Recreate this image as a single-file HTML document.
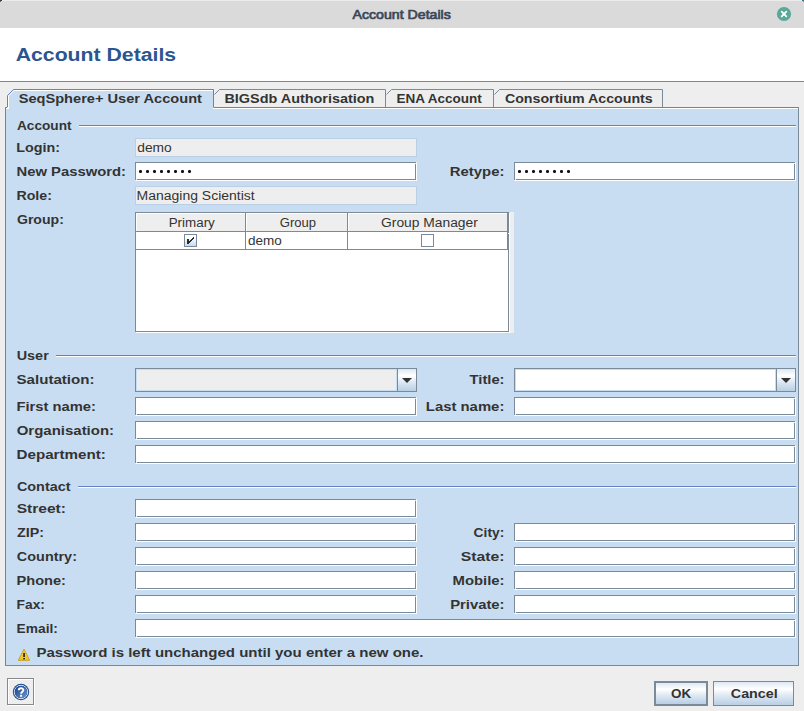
<!DOCTYPE html>
<html><head><meta charset="utf-8"><title>Account Details</title>
<style>
html,body{margin:0;padding:0}
body{width:804px;height:711px;overflow:hidden;background:#eeeeee;position:relative;font-family:"Liberation Sans",sans-serif}
body>div,body>span{position:absolute;display:block}
span{white-space:pre;transform-origin:0 0;font-family:"Liberation Sans",sans-serif}
</style></head><body>
<div style="left:0px;top:0px;width:804px;height:28px;background:#dadada;"></div>
<div style="left:0px;top:0px;width:804px;height:1px;background:#ececec;"></div>
<div style="left:0px;top:0px;width:2px;height:1px;background:#3a3a48;"></div>
<div style="left:0px;top:1px;width:1px;height:1px;background:#6b6b75;"></div>
<div style="left:802px;top:0px;width:2px;height:1px;background:#3f6f73;"></div>
<div style="left:803px;top:1px;width:1px;height:1px;background:#7da0a2;"></div>
<div style="left:0px;top:28px;width:804px;height:53px;background:#ffffff;"></div>
<div style="left:0px;top:81px;width:804px;height:1px;background:#868686;"></div>
<div style="left:5px;top:107px;width:794px;height:559px;background:#c8ddf2;"></div>
<div style="left:5px;top:107px;width:1px;height:559px;background:#6382bf;"></div>
<div style="left:5px;top:107px;width:794px;height:1px;background:#6382bf;"></div>
<div style="left:6px;top:108px;width:792px;height:1px;background:#ffffff;"></div>
<div style="left:798px;top:107px;width:1px;height:559px;background:#7a8a99;"></div>
<div style="left:5px;top:665px;width:794px;height:1px;background:#7a8a99;"></div>
<svg style="position:absolute;left:0;top:0" width="804" height="711" viewBox="0 0 804 711" shape-rendering="crispEdges"><path d="M214.5 94.5 L219.5 89.5 L385.5 89.5 L385.5 107" fill="none" stroke="#7a8a99" stroke-width="1" shape-rendering="auto"/><path d="M386.5 94.5 L391.5 89.5 L493.5 89.5 L493.5 107" fill="none" stroke="#7a8a99" stroke-width="1" shape-rendering="auto"/><path d="M494.5 94.5 L499.5 89.5 L662.5 89.5 L662.5 107" fill="none" stroke="#7a8a99" stroke-width="1" shape-rendering="auto"/><path d="M7 109 L7 96 L13.5 89.5 L214 89.5 L214 108 L7 108 Z" fill="#c8ddf2" shape-rendering="auto"/><path d="M8.5 108 L8.5 96 L14 90.5 L213 90.5" fill="none" stroke="#ffffff" stroke-width="1" shape-rendering="auto"/><path d="M7.5 107 L7.5 95.5 L13.5 89.5 L213.5 89.5 L213.5 107.5" fill="none" stroke="#6382bf" stroke-width="1" shape-rendering="auto"/></svg>
<div style="left:8px;top:107px;width:205px;height:2px;background:#c8ddf2;"></div>
<div style="left:8px;top:107px;width:1px;height:2px;background:#ffffff;"></div>
<div style="left:79px;top:125px;width:717px;height:1px;background:#6382bf;"></div>
<div style="left:79px;top:126px;width:717px;height:1px;background:#ffffff;"></div>
<div style="left:56px;top:355px;width:740px;height:1px;background:#6382bf;"></div>
<div style="left:56px;top:356px;width:740px;height:1px;background:#ffffff;"></div>
<div style="left:78px;top:486px;width:718px;height:1px;background:#6382bf;"></div>
<div style="left:78px;top:487px;width:718px;height:1px;background:#ffffff;"></div>
<div style="left:135px;top:138px;width:282px;height:19px;background:#eeeeee;border:1px solid #b8cfe5;box-sizing:border-box"></div>
<div style="left:136px;top:163px;width:281px;height:18px;background:#ffffff;"></div>
<div style="left:135px;top:162px;width:281px;height:18px;background:transparent;border:1px solid #7a8a99;box-sizing:border-box"></div>
<div style="left:135px;top:180px;width:1px;height:1px;background:#eeeeee;"></div>
<div style="left:136px;top:179px;width:1px;height:1px;background:#eeeeee;"></div>
<div style="left:416px;top:162px;width:1px;height:1px;background:#eeeeee;"></div>
<div style="left:415px;top:163px;width:1px;height:1px;background:#eeeeee;"></div>
<div style="left:515px;top:163px;width:281px;height:18px;background:#ffffff;"></div>
<div style="left:514px;top:162px;width:281px;height:18px;background:transparent;border:1px solid #7a8a99;box-sizing:border-box"></div>
<div style="left:514px;top:180px;width:1px;height:1px;background:#eeeeee;"></div>
<div style="left:515px;top:179px;width:1px;height:1px;background:#eeeeee;"></div>
<div style="left:795px;top:162px;width:1px;height:1px;background:#eeeeee;"></div>
<div style="left:794px;top:163px;width:1px;height:1px;background:#eeeeee;"></div>
<div style="left:135px;top:186px;width:282px;height:19px;background:#eeeeee;border:1px solid #b8cfe5;box-sizing:border-box"></div>
<div style="left:136px;top:398px;width:281px;height:18px;background:#ffffff;"></div>
<div style="left:135px;top:397px;width:281px;height:18px;background:transparent;border:1px solid #7a8a99;box-sizing:border-box"></div>
<div style="left:135px;top:415px;width:1px;height:1px;background:#eeeeee;"></div>
<div style="left:136px;top:414px;width:1px;height:1px;background:#eeeeee;"></div>
<div style="left:416px;top:397px;width:1px;height:1px;background:#eeeeee;"></div>
<div style="left:415px;top:398px;width:1px;height:1px;background:#eeeeee;"></div>
<div style="left:515px;top:398px;width:281px;height:18px;background:#ffffff;"></div>
<div style="left:514px;top:397px;width:281px;height:18px;background:transparent;border:1px solid #7a8a99;box-sizing:border-box"></div>
<div style="left:514px;top:415px;width:1px;height:1px;background:#eeeeee;"></div>
<div style="left:515px;top:414px;width:1px;height:1px;background:#eeeeee;"></div>
<div style="left:795px;top:397px;width:1px;height:1px;background:#eeeeee;"></div>
<div style="left:794px;top:398px;width:1px;height:1px;background:#eeeeee;"></div>
<div style="left:136px;top:422px;width:660px;height:18px;background:#ffffff;"></div>
<div style="left:135px;top:421px;width:660px;height:18px;background:transparent;border:1px solid #7a8a99;box-sizing:border-box"></div>
<div style="left:135px;top:439px;width:1px;height:1px;background:#eeeeee;"></div>
<div style="left:136px;top:438px;width:1px;height:1px;background:#eeeeee;"></div>
<div style="left:795px;top:421px;width:1px;height:1px;background:#eeeeee;"></div>
<div style="left:794px;top:422px;width:1px;height:1px;background:#eeeeee;"></div>
<div style="left:136px;top:446px;width:660px;height:18px;background:#ffffff;"></div>
<div style="left:135px;top:445px;width:660px;height:18px;background:transparent;border:1px solid #7a8a99;box-sizing:border-box"></div>
<div style="left:135px;top:463px;width:1px;height:1px;background:#eeeeee;"></div>
<div style="left:136px;top:462px;width:1px;height:1px;background:#eeeeee;"></div>
<div style="left:795px;top:445px;width:1px;height:1px;background:#eeeeee;"></div>
<div style="left:794px;top:446px;width:1px;height:1px;background:#eeeeee;"></div>
<div style="left:136px;top:500px;width:281px;height:18px;background:#ffffff;"></div>
<div style="left:135px;top:499px;width:281px;height:18px;background:transparent;border:1px solid #7a8a99;box-sizing:border-box"></div>
<div style="left:135px;top:517px;width:1px;height:1px;background:#eeeeee;"></div>
<div style="left:136px;top:516px;width:1px;height:1px;background:#eeeeee;"></div>
<div style="left:416px;top:499px;width:1px;height:1px;background:#eeeeee;"></div>
<div style="left:415px;top:500px;width:1px;height:1px;background:#eeeeee;"></div>
<div style="left:136px;top:524px;width:281px;height:18px;background:#ffffff;"></div>
<div style="left:135px;top:523px;width:281px;height:18px;background:transparent;border:1px solid #7a8a99;box-sizing:border-box"></div>
<div style="left:135px;top:541px;width:1px;height:1px;background:#eeeeee;"></div>
<div style="left:136px;top:540px;width:1px;height:1px;background:#eeeeee;"></div>
<div style="left:416px;top:523px;width:1px;height:1px;background:#eeeeee;"></div>
<div style="left:415px;top:524px;width:1px;height:1px;background:#eeeeee;"></div>
<div style="left:515px;top:524px;width:281px;height:18px;background:#ffffff;"></div>
<div style="left:514px;top:523px;width:281px;height:18px;background:transparent;border:1px solid #7a8a99;box-sizing:border-box"></div>
<div style="left:514px;top:541px;width:1px;height:1px;background:#eeeeee;"></div>
<div style="left:515px;top:540px;width:1px;height:1px;background:#eeeeee;"></div>
<div style="left:795px;top:523px;width:1px;height:1px;background:#eeeeee;"></div>
<div style="left:794px;top:524px;width:1px;height:1px;background:#eeeeee;"></div>
<div style="left:136px;top:548px;width:281px;height:18px;background:#ffffff;"></div>
<div style="left:135px;top:547px;width:281px;height:18px;background:transparent;border:1px solid #7a8a99;box-sizing:border-box"></div>
<div style="left:135px;top:565px;width:1px;height:1px;background:#eeeeee;"></div>
<div style="left:136px;top:564px;width:1px;height:1px;background:#eeeeee;"></div>
<div style="left:416px;top:547px;width:1px;height:1px;background:#eeeeee;"></div>
<div style="left:415px;top:548px;width:1px;height:1px;background:#eeeeee;"></div>
<div style="left:515px;top:548px;width:281px;height:18px;background:#ffffff;"></div>
<div style="left:514px;top:547px;width:281px;height:18px;background:transparent;border:1px solid #7a8a99;box-sizing:border-box"></div>
<div style="left:514px;top:565px;width:1px;height:1px;background:#eeeeee;"></div>
<div style="left:515px;top:564px;width:1px;height:1px;background:#eeeeee;"></div>
<div style="left:795px;top:547px;width:1px;height:1px;background:#eeeeee;"></div>
<div style="left:794px;top:548px;width:1px;height:1px;background:#eeeeee;"></div>
<div style="left:136px;top:572px;width:281px;height:18px;background:#ffffff;"></div>
<div style="left:135px;top:571px;width:281px;height:18px;background:transparent;border:1px solid #7a8a99;box-sizing:border-box"></div>
<div style="left:135px;top:589px;width:1px;height:1px;background:#eeeeee;"></div>
<div style="left:136px;top:588px;width:1px;height:1px;background:#eeeeee;"></div>
<div style="left:416px;top:571px;width:1px;height:1px;background:#eeeeee;"></div>
<div style="left:415px;top:572px;width:1px;height:1px;background:#eeeeee;"></div>
<div style="left:515px;top:572px;width:281px;height:18px;background:#ffffff;"></div>
<div style="left:514px;top:571px;width:281px;height:18px;background:transparent;border:1px solid #7a8a99;box-sizing:border-box"></div>
<div style="left:514px;top:589px;width:1px;height:1px;background:#eeeeee;"></div>
<div style="left:515px;top:588px;width:1px;height:1px;background:#eeeeee;"></div>
<div style="left:795px;top:571px;width:1px;height:1px;background:#eeeeee;"></div>
<div style="left:794px;top:572px;width:1px;height:1px;background:#eeeeee;"></div>
<div style="left:136px;top:596px;width:281px;height:18px;background:#ffffff;"></div>
<div style="left:135px;top:595px;width:281px;height:18px;background:transparent;border:1px solid #7a8a99;box-sizing:border-box"></div>
<div style="left:135px;top:613px;width:1px;height:1px;background:#eeeeee;"></div>
<div style="left:136px;top:612px;width:1px;height:1px;background:#eeeeee;"></div>
<div style="left:416px;top:595px;width:1px;height:1px;background:#eeeeee;"></div>
<div style="left:415px;top:596px;width:1px;height:1px;background:#eeeeee;"></div>
<div style="left:515px;top:596px;width:281px;height:18px;background:#ffffff;"></div>
<div style="left:514px;top:595px;width:281px;height:18px;background:transparent;border:1px solid #7a8a99;box-sizing:border-box"></div>
<div style="left:514px;top:613px;width:1px;height:1px;background:#eeeeee;"></div>
<div style="left:515px;top:612px;width:1px;height:1px;background:#eeeeee;"></div>
<div style="left:795px;top:595px;width:1px;height:1px;background:#eeeeee;"></div>
<div style="left:794px;top:596px;width:1px;height:1px;background:#eeeeee;"></div>
<div style="left:136px;top:620px;width:660px;height:18px;background:#ffffff;"></div>
<div style="left:135px;top:619px;width:660px;height:18px;background:transparent;border:1px solid #7a8a99;box-sizing:border-box"></div>
<div style="left:135px;top:637px;width:1px;height:1px;background:#eeeeee;"></div>
<div style="left:136px;top:636px;width:1px;height:1px;background:#eeeeee;"></div>
<div style="left:795px;top:619px;width:1px;height:1px;background:#eeeeee;"></div>
<div style="left:794px;top:620px;width:1px;height:1px;background:#eeeeee;"></div>
<div style="left:139px;top:170px;width:3px;height:3px;background:#111;border-radius:1.2px"></div>
<div style="left:146px;top:170px;width:3px;height:3px;background:#111;border-radius:1.2px"></div>
<div style="left:153px;top:170px;width:3px;height:3px;background:#111;border-radius:1.2px"></div>
<div style="left:160px;top:170px;width:3px;height:3px;background:#111;border-radius:1.2px"></div>
<div style="left:167px;top:170px;width:3px;height:3px;background:#111;border-radius:1.2px"></div>
<div style="left:174px;top:170px;width:3px;height:3px;background:#111;border-radius:1.2px"></div>
<div style="left:181px;top:170px;width:3px;height:3px;background:#111;border-radius:1.2px"></div>
<div style="left:188px;top:170px;width:3px;height:3px;background:#111;border-radius:1.2px"></div>
<div style="left:518px;top:170px;width:3px;height:3px;background:#111;border-radius:1.2px"></div>
<div style="left:525px;top:170px;width:3px;height:3px;background:#111;border-radius:1.2px"></div>
<div style="left:532px;top:170px;width:3px;height:3px;background:#111;border-radius:1.2px"></div>
<div style="left:539px;top:170px;width:3px;height:3px;background:#111;border-radius:1.2px"></div>
<div style="left:546px;top:170px;width:3px;height:3px;background:#111;border-radius:1.2px"></div>
<div style="left:553px;top:170px;width:3px;height:3px;background:#111;border-radius:1.2px"></div>
<div style="left:560px;top:170px;width:3px;height:3px;background:#111;border-radius:1.2px"></div>
<div style="left:567px;top:170px;width:3px;height:3px;background:#111;border-radius:1.2px"></div>
<div style="left:135px;top:368px;width:282px;height:24px;background:#c8ddf2;border:1px solid #7a8a99;box-sizing:border-box"></div>
<div style="left:137px;top:370px;width:259px;height:20px;background:#eeeeee;"></div>
<div style="left:397px;top:368px;width:20px;height:24px;background:linear-gradient(to bottom,#dde8f3 0%,#ffffff 30%,#dde8f3 60%,#b8cfe5 100%);border:1px solid #7a8a99;box-sizing:border-box"></div>
<svg style="position:absolute;left:402px;top:378px" width="10" height="5" viewBox="0 0 10 5"><path d="M0 0 L10 0 L5 5 Z" fill="#333"/></svg>
<div style="left:514px;top:368px;width:282px;height:24px;background:#c8ddf2;border:1px solid #7a8a99;box-sizing:border-box"></div>
<div style="left:516px;top:370px;width:259px;height:20px;background:#ffffff;"></div>
<div style="left:776px;top:368px;width:20px;height:24px;background:linear-gradient(to bottom,#dde8f3 0%,#ffffff 30%,#dde8f3 60%,#b8cfe5 100%);border:1px solid #7a8a99;box-sizing:border-box"></div>
<svg style="position:absolute;left:781px;top:378px" width="10" height="5" viewBox="0 0 10 5"><path d="M0 0 L10 0 L5 5 Z" fill="#333"/></svg>
<div style="left:510px;top:212px;width:4px;height:121px;background:#eeeeee;"></div>
<div style="left:136px;top:213px;width:374px;height:120px;background:#ffffff;"></div>
<div style="left:135px;top:212px;width:374px;height:120px;background:transparent;border:1px solid #7a8a99;box-sizing:border-box"></div>
<div style="left:136px;top:213px;width:371px;height:18px;background:#eeeeee;"></div>
<div style="left:136px;top:213px;width:371px;height:1px;background:#ffffff;"></div>
<div style="left:136px;top:213px;width:1px;height:18px;background:#ffffff;"></div>
<div style="left:246px;top:213px;width:1px;height:18px;background:#ffffff;"></div>
<div style="left:348px;top:213px;width:1px;height:18px;background:#ffffff;"></div>
<div style="left:136px;top:231px;width:372px;height:1px;background:#7a8a99;"></div>
<div style="left:136px;top:249px;width:372px;height:1px;background:#7a8a99;"></div>
<div style="left:245px;top:213px;width:1px;height:37px;background:#7a8a99;"></div>
<div style="left:347px;top:213px;width:1px;height:37px;background:#7a8a99;"></div>
<div style="left:507px;top:213px;width:1px;height:37px;background:#7a8a99;"></div>
<div style="left:508px;top:233px;width:1px;height:1px;background:#ffffff;"></div>
<div style="left:184px;top:234px;width:13px;height:13px;background:linear-gradient(to bottom,#ffffff 0%,#ffffff 25%,#c5daf0 100%);border:1px solid #7a8a99;box-sizing:border-box"></div>
<div style="left:187px;top:239px;width:2px;height:5px;background:#2b2b2b;"></div>
<div style="left:189px;top:241px;width:1px;height:2px;background:#2b2b2b;"></div>
<div style="left:190px;top:240px;width:1px;height:2px;background:#2b2b2b;"></div>
<div style="left:191px;top:239px;width:1px;height:2px;background:#2b2b2b;"></div>
<div style="left:192px;top:238px;width:1px;height:2px;background:#2b2b2b;"></div>
<div style="left:193px;top:237px;width:1px;height:2px;background:#2b2b2b;"></div>
<div style="left:421px;top:234px;width:13px;height:13px;background:#ffffff;border:1px solid #7a8a99;box-sizing:border-box"></div>
<svg style="position:absolute;left:17px;top:648px" width="14" height="14" viewBox="0 0 14 14"><defs><linearGradient id="wg" x1="0" y1="0" x2="0" y2="1"><stop offset="0" stop-color="#f3d34a"/><stop offset="1" stop-color="#f7c21d"/></linearGradient></defs><path d="M7 1.2 L12.7 12.3 L1.3 12.3 Z" fill="url(#wg)" stroke="#c99a16" stroke-width="0.9" stroke-linejoin="round"/><rect x="6.3" y="5" width="1.5" height="4" fill="#111"/><rect x="6.3" y="10" width="1.5" height="1.4" fill="#111"/></svg>
<div style="left:654px;top:681px;width:54px;height:25px;background:linear-gradient(to bottom,#dde8f3 0%,#ffffff 30%,#dde8f3 60%,#b8cfe5 100%);border:2px solid #7a8a99;box-sizing:border-box"></div>
<div style="left:713px;top:681px;width:81px;height:25px;background:linear-gradient(to bottom,#dde8f3 0%,#ffffff 30%,#dde8f3 60%,#b8cfe5 100%);border:1px solid #7a8a99;box-sizing:border-box"></div>
<div style="left:8px;top:679px;width:27px;height:27px;background:#ffffff;"></div>
<div style="left:9px;top:680px;width:25px;height:25px;background:#eeeeee;"></div>
<div style="left:7px;top:678px;width:27px;height:27px;background:transparent;border:1px solid #8a8a8a;box-sizing:border-box"></div>
<div style="left:9px;top:680px;width:24px;height:24px;background:#eeeeee;"></div>
<svg style="position:absolute;left:12px;top:683px" width="18" height="18" viewBox="0 0 18 18"><defs><linearGradient id="hg" x1="0" y1="0" x2="1" y2="1"><stop offset="0" stop-color="#123f86"/><stop offset="1" stop-color="#6f97c8"/></linearGradient></defs><circle cx="9" cy="9" r="8.2" fill="#1c4a93"/><circle cx="9" cy="9" r="6.7" fill="none" stroke="#fff" stroke-width="0.9"/><circle cx="9" cy="9" r="6.25" fill="url(#hg)"/><path d="M6.7 7.2 C6.7 4.6 11.4 4.6 11.4 7.1 C11.4 8.8 9.1 8.9 9.1 10.8" fill="none" stroke="#fff" stroke-width="1.9"/><rect x="8.1" y="11.8" width="2" height="2" fill="#fff"/></svg>
<svg style="position:absolute;left:776px;top:6px" width="16" height="16" viewBox="0 0 16 16"><circle cx="8" cy="8" r="7.1" fill="#58a99a"/><path d="M5.7 5.7 L10.3 10.3 M10.3 5.7 L5.7 10.3" stroke="#fff" stroke-width="1.8" stroke-linecap="round"/></svg>
<span style="left:0;top:7px;font-weight:normal;font-size:13px;line-height:15px;color:#3b4757;transform:translateX(352.49px) scaleX(1.0889);-webkit-text-stroke:0.7px #3b4757">Account Details</span>
<span style="left:0;top:45px;font-weight:bold;font-size:18px;line-height:20px;color:#2b5590;transform:translateX(15.68px) scaleX(1.1798)">Account Details</span>
<span style="left:0;top:92px;font-weight:bold;font-size:12.5px;line-height:14px;color:#333333;transform:translateX(18.64px) scaleX(1.1684)">SeqSphere+ User Account</span>
<span style="left:0;top:92px;font-weight:bold;font-size:12.5px;line-height:14px;color:#333333;transform:translateX(224.45px) scaleX(1.1525)">BIGSdb Authorisation</span>
<span style="left:0;top:92px;font-weight:bold;font-size:12.5px;line-height:14px;color:#333333;transform:translateX(396.57px) scaleX(1.0798)">ENA Account</span>
<span style="left:0;top:92px;font-weight:bold;font-size:12.5px;line-height:14px;color:#333333;transform:translateX(504.94px) scaleX(1.1359)">Consortium Accounts</span>
<span style="left:0;top:119px;font-weight:bold;font-size:12.5px;line-height:14px;color:#333333;transform:translateX(16.97px) scaleX(1.0910)">Account</span>
<span style="left:0;top:141px;font-weight:bold;font-size:12.5px;line-height:14px;color:#333333;transform:translateX(16.34px) scaleX(1.1453)">Login:</span>
<span style="left:0;top:165px;font-weight:bold;font-size:12.5px;line-height:14px;color:#333333;transform:translateX(16.44px) scaleX(1.1865)">New Password:</span>
<span style="left:0;top:189px;font-weight:bold;font-size:12.5px;line-height:14px;color:#333333;transform:translateX(16.38px) scaleX(1.1356)">Role:</span>
<span style="left:0;top:213px;font-weight:bold;font-size:12.5px;line-height:14px;color:#333333;transform:translateX(16.93px) scaleX(1.1262)">Group:</span>
<span style="left:0;top:165px;font-weight:bold;font-size:12.5px;line-height:14px;color:#333333;transform:translateX(449.81px) scaleX(1.1906)">Retype:</span>
<span style="left:0;top:349px;font-weight:bold;font-size:12.5px;line-height:14px;color:#333333;transform:translateX(16.68px) scaleX(1.1533)">User</span>
<span style="left:0;top:373px;font-weight:bold;font-size:12.5px;line-height:14px;color:#333333;transform:translateX(16.49px) scaleX(1.2080)">Salutation:</span>
<span style="left:0;top:400px;font-weight:bold;font-size:12.5px;line-height:14px;color:#333333;transform:translateX(16.43px) scaleX(1.1796)">First name:</span>
<span style="left:0;top:424px;font-weight:bold;font-size:12.5px;line-height:14px;color:#333333;transform:translateX(16.70px) scaleX(1.1983)">Organisation:</span>
<span style="left:0;top:448px;font-weight:bold;font-size:12.5px;line-height:14px;color:#333333;transform:translateX(16.49px) scaleX(1.2138)">Department:</span>
<span style="left:0;top:373px;font-weight:bold;font-size:12.5px;line-height:14px;color:#333333;transform:translateX(469.60px) scaleX(1.1787)">Title:</span>
<span style="left:0;top:400px;font-weight:bold;font-size:12.5px;line-height:14px;color:#333333;transform:translateX(425.79px) scaleX(1.1905)">Last name:</span>
<span style="left:0;top:480px;font-weight:bold;font-size:12.5px;line-height:14px;color:#333333;transform:translateX(16.88px) scaleX(1.1530)">Contact</span>
<span style="left:0;top:502px;font-weight:bold;font-size:12.5px;line-height:14px;color:#333333;transform:translateX(16.67px) scaleX(1.2455)">Street:</span>
<span style="left:0;top:526px;font-weight:bold;font-size:12.5px;line-height:14px;color:#333333;transform:translateX(16.98px) scaleX(1.1454)">ZIP:</span>
<span style="left:0;top:550px;font-weight:bold;font-size:12.5px;line-height:14px;color:#333333;transform:translateX(16.87px) scaleX(1.1535)">Country:</span>
<span style="left:0;top:574px;font-weight:bold;font-size:12.5px;line-height:14px;color:#333333;transform:translateX(16.51px) scaleX(1.1678)">Phone:</span>
<span style="left:0;top:598px;font-weight:bold;font-size:12.5px;line-height:14px;color:#333333;transform:translateX(16.59px) scaleX(1.1027)">Fax:</span>
<span style="left:0;top:622px;font-weight:bold;font-size:12.5px;line-height:14px;color:#333333;transform:translateX(16.58px) scaleX(1.1006)">Email:</span>
<span style="left:0;top:526px;font-weight:bold;font-size:12.5px;line-height:14px;color:#333333;transform:translateX(473.59px) scaleX(1.1038)">City:</span>
<span style="left:0;top:550px;font-weight:bold;font-size:12.5px;line-height:14px;color:#333333;transform:translateX(460.81px) scaleX(1.2615)">State:</span>
<span style="left:0;top:574px;font-weight:bold;font-size:12.5px;line-height:14px;color:#333333;transform:translateX(452.50px) scaleX(1.1892)">Mobile:</span>
<span style="left:0;top:598px;font-weight:bold;font-size:12.5px;line-height:14px;color:#333333;transform:translateX(450.14px) scaleX(1.1854)">Private:</span>
<span style="left:0;top:646px;font-weight:bold;font-size:12.5px;line-height:14px;color:#333333;transform:translateX(36.39px) scaleX(1.2013)">Password is left unchanged until you enter a new one.</span>
<span style="left:0;top:687px;font-weight:bold;font-size:12.5px;line-height:14px;color:#333333;transform:translateX(670.96px) scaleX(1.0757)">OK</span>
<span style="left:0;top:687px;font-weight:bold;font-size:12.5px;line-height:14px;color:#333333;transform:translateX(730.86px) scaleX(1.1416)">Cancel</span>
<span style="left:0;top:141px;font-weight:normal;font-size:12.5px;line-height:14px;color:#333333;transform:translateX(137.24px) scaleX(1.1019)">demo</span>
<span style="left:0;top:189px;font-weight:normal;font-size:12.5px;line-height:14px;color:#333333;transform:translateX(136.58px) scaleX(1.1185)">Managing Scientist</span>
<span style="left:0;top:216px;font-weight:normal;font-size:12.5px;line-height:14px;color:#333333;transform:translateX(168.64px) scaleX(1.0727)">Primary</span>
<span style="left:0;top:216px;font-weight:normal;font-size:12.5px;line-height:14px;color:#333333;transform:translateX(279.82px) scaleX(1.0440)">Group</span>
<span style="left:0;top:216px;font-weight:normal;font-size:12.5px;line-height:14px;color:#333333;transform:translateX(381.04px) scaleX(1.1050)">Group Manager</span>
<span style="left:0;top:234px;font-weight:normal;font-size:12.5px;line-height:14px;color:#333333;transform:translateX(247.91px) scaleX(1.0822)">demo</span>
</body></html>
